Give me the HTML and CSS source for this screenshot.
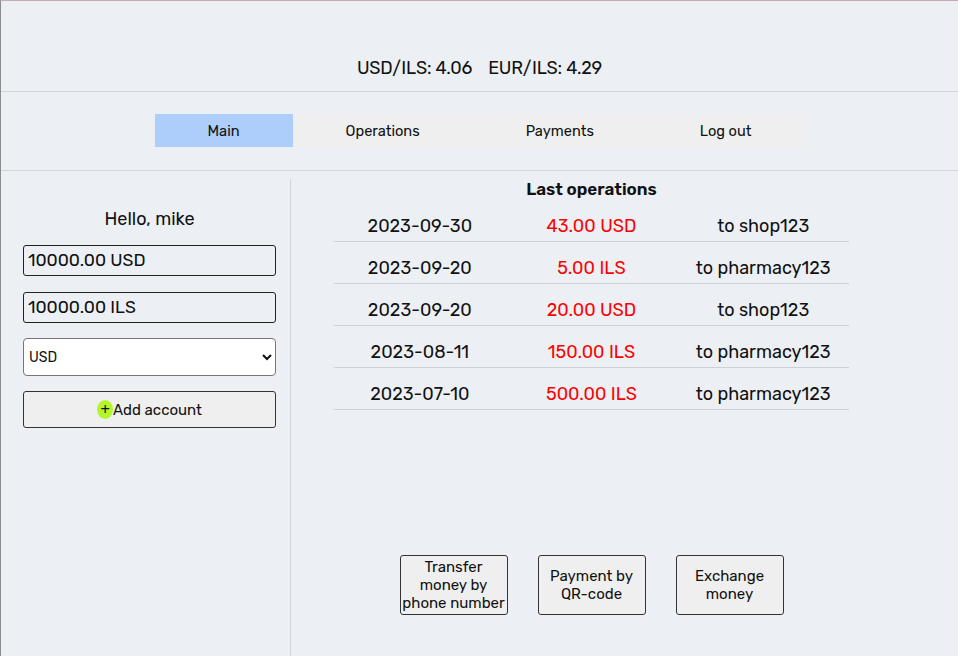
FILE: index.html
```html
<!DOCTYPE html>
<html lang="en">
<head>
<meta charset="utf-8">
<title>Bank</title>
<link rel="stylesheet" href="styles.css">
</head>
<body>
<div class="page">
  <header class="rates">
    <span>USD/ILS: 4.06</span><span>EUR/ILS: 4.29</span>
  </header>
  <div class="navwrap">
    <nav class="nav">
      <a class="nav-item active">Main</a>
      <a class="nav-item">Operations</a>
      <a class="nav-item">Payments</a>
      <a class="nav-item">Log out</a>
    </nav>
  </div>
  <main class="main">
    <aside class="side">
      <div class="hello">Hello, mike</div>
      <div class="acct">10000.00 USD</div>
      <div class="acct">10000.00 ILS</div>
      <select class="cur">
        <option>USD</option>
        <option>ILS</option>
        <option>EUR</option>
      </select>
      <button class="add"><span class="plus">+</span>Add account</button>
    </aside>
    <section class="content">
      <div class="inner">
        <h2 class="title">Last operations</h2>
        <div class="ops">
          <div class="row"><span>2023-09-30</span><span class="amt">43.00 USD</span><span>to shop123</span></div>
          <div class="row"><span>2023-09-20</span><span class="amt">5.00 ILS</span><span>to pharmacy123</span></div>
          <div class="row"><span>2023-09-20</span><span class="amt">20.00 USD</span><span>to shop123</span></div>
          <div class="row"><span>2023-08-11</span><span class="amt">150.00 ILS</span><span>to pharmacy123</span></div>
          <div class="row"><span>2023-07-10</span><span class="amt">500.00 ILS</span><span>to pharmacy123</span></div>
        </div>
        <div class="actions">
          <button class="act">Transfer money by phone number</button>
          <button class="act">Payment by QR-code</button>
          <button class="act">Exchange money</button>
        </div>
      </div>
    </section>
  </main>
</div>
</body>
</html>
```
FILE: styles.css
```css
html, body {
  margin: 0;
  padding: 0;
  background: #ecf0f4;
}
body {
  font-family: "Rubik", "Inter", "Noto Sans", sans-serif;
  color: #111;
}
.page {
  width: 958px;
  height: 656px;
  box-sizing: border-box;
  border-top: 1px solid #c9a9b6;
  border-left: 1px solid #8c8c8c;
  display: flex;
  flex-direction: column;
  overflow: hidden;
}
.rates {
  height: 91px;
  box-sizing: border-box;
  padding-top: 56px;
  border-bottom: 1px solid #d2d5d9;
  display: flex;
  justify-content: center;
  gap: 16px;
  font-size: 18px;
  line-height: 22px;
  letter-spacing: -0.2px;
}
.navwrap {
  height: 79px;
  box-sizing: border-box;
  padding-top: 22px;
  border-bottom: 1px solid #d2d5d9;
  display: flex;
  justify-content: center;
}
.nav {
  display: flex;
  height: 33px;
  background: #efefef;
}
.nav-item {
  padding: 0 53px;
  font-size: 14.6px;
  line-height: 34px;
  color: #111;
}
.nav-item.active {
  background: #adcdfa;
}
.main {
  flex: 1;
  display: flex;
  padding-top: 8px;
}
.side {
  width: 290px;
  box-sizing: border-box;
  border-right: 1px solid #d2d5d9;
  display: flex;
  flex-direction: column;
  padding: 30px 0 0 22px;
}
.hello {
  width: 253px;
  text-align: center;
  font-size: 18px;
  line-height: 20px;
  margin-bottom: 16px;
}
.acct {
  width: 253px;
  height: 31px;
  box-sizing: border-box;
  border: 1px solid #222;
  border-radius: 3px;
  padding-left: 4px;
  font-size: 17.5px;
  line-height: 29px;
  margin-bottom: 16px;
}
.acct + .acct {
  margin-bottom: 15px;
}
.cur {
  width: 253px;
  height: 38px;
  box-sizing: border-box;
  border: 1px solid #767676;
  border-radius: 4px;
  background: #fff;
  font-family: "Rubik", "Inter", sans-serif;
  font-size: 14px;
  color: #111;
  padding-left: 1px;
  margin: 0 0 15px 0;
}
.add {
  width: 253px;
  height: 37px;
  box-sizing: border-box;
  border: 1px solid #333;
  border-radius: 3px;
  background: #efefef;
  font-family: "Rubik", "Inter", sans-serif;
  font-size: 15px;
  color: #111;
  display: flex;
  align-items: center;
  justify-content: center;
  padding: 0;
}
.plus {
  display: inline-block;
  width: 16px;
  height: 19px;
  border-radius: 50%;
  background: #b4f52c;
  text-align: center;
  line-height: 19px;
  font-size: 15px;
}
.content {
  flex: 1;
}
.inner {
  width: 515px;
  margin-left: 43px;
  display: flex;
  flex-direction: column;
}
.title {
  margin: 0;
  text-align: center;
  font-size: 17px;
  line-height: 21px;
  font-weight: 600;
}
.row {
  display: grid;
  grid-template-columns: 1fr 1fr 1fr;
  border-bottom: 1px solid #cdd0d4;
  padding: 16px 0 5px;
  font-size: 18px;
  line-height: 20px;
  text-align: center;
}
.amt {
  color: #ff0000;
}
.actions {
  display: flex;
  justify-content: center;
  gap: 30px;
  margin-top: 145px;
}
.act {
  width: 108px;
  height: 60px;
  box-sizing: border-box;
  border: 1px solid #333;
  border-radius: 3px;
  background: #efefef;
  font-family: "Rubik", "Inter", sans-serif;
  font-size: 15px;
  line-height: 18px;
  color: #111;
  padding: 0 1px;
}
```
